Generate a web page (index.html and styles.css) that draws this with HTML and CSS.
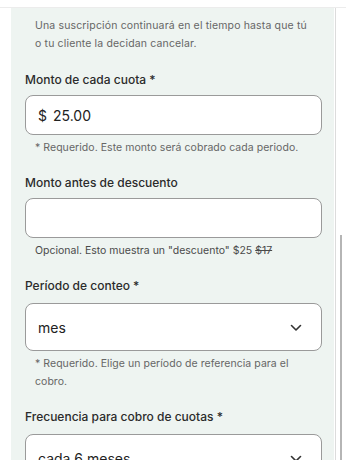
FILE: index.html
```html
<!DOCTYPE html>
<html lang="es">
<head>
    <meta charset="UTF-8">
    <meta name="viewport" content="width=device-width, initial-scale=1.0">
    <title>Suscripción</title>
    <link rel="stylesheet" href="styles.css">
</head>
<body>

<div class="top-bar"></div>

<div class="page">
    <div class="panel">
        <p class="intro">Una suscripción continuará en el tiempo hasta que tú o tu cliente la decidan cancelar.</p>

        <div class="field">
            <label class="label">Monto de cada cuota *</label>
            <div class="input"><span class="currency">$</span> 25.00</div>
            <div class="hint">* Requerido. Este monto será cobrado cada periodo.</div>
        </div>

        <div class="field">
            <label class="label">Monto antes de descuento</label>
            <div class="input"></div>
            <div class="hint dark">Opcional. Esto muestra un "descuento" $25 <s>$17</s></div>
        </div>

        <div class="field">
            <label class="label wide-gap">Período de conteo *</label>
            <div class="input select">
                <span>mes</span>
                <svg class="chevron" width="12" height="8" viewBox="0 0 12 8"><path d="M1.5 1.5 L6 6 L10.5 1.5" fill="none" stroke="#333" stroke-width="1.6" stroke-linecap="round" stroke-linejoin="round"/></svg>
            </div>
            <div class="hint narrow">* Requerido. Elige un período de referencia para el cobro.</div>
        </div>

        <div class="field">
            <label class="label wide-gap">Frecuencia para cobro de cuotas *</label>
            <div class="input select">
                <span>cada 6 meses</span>
                <svg class="chevron" width="12" height="8" viewBox="0 0 12 8"><path d="M1.5 1.5 L6 6 L10.5 1.5" fill="none" stroke="#333" stroke-width="1.6" stroke-linecap="round" stroke-linejoin="round"/></svg>
            </div>
        </div>
    </div>
    <div class="side"></div>
</div>

<div class="scroll-thumb"></div>

</body>
</html>
```

FILE: styles.css
```css
body {
    font-family: Inter, 'Noto Sans', sans-serif;
    background-color: white;
    margin: 0;
    padding: 0;
    height: 460px;
    overflow: hidden;
    color: #2b2b2b;
}

.top-bar {
    height: 7px;
    border-bottom: 1px solid #ececec;
    background-color: white;
}

.page {
    display: flex;
    padding-left: 11px;
}

.panel {
    width: 323px;
    background-color: #eef4f1;
    padding: 9px 12px 0 14px;
    box-sizing: border-box;
    min-height: 460px;
}

.side {
    width: 1px;
    margin-left: 1px;
    background-color: #dcdcdc;
}

.intro {
    margin: 0 0 19px 10px;
    font-size: 10.5px;
    letter-spacing: 0.15px;
    line-height: 18px;
    color: #666;
    width: 272px;
}

.field {
    margin-bottom: 18px;
}

.label {
    display: block;
    font-size: 12px;
    font-weight: 500;
    color: #2b2b2b;
    margin-bottom: 8px;
}

.label.wide-gap {
    margin-bottom: 10px;
}

.input {
    height: 40px;
    box-sizing: border-box;
    background-color: white;
    border: 1px solid #9a9a9a;
    border-radius: 8px;
    padding: 0 12px;
    display: flex;
    align-items: center;
    font-size: 14px;
    color: #222;
}

.currency {
    margin-right: 6px;
}

.select {
    height: 48px;
    justify-content: space-between;
    padding: 0 19px 0 12px;
}

.chevron {
    margin-top: 1px;
}

.hint {
    margin: 4px 0 0 10px;
    font-size: 10.5px;
    letter-spacing: 0.05px;
    line-height: 18px;
    color: #666;
}

.hint.dark {
    color: #4a4a4a;
    letter-spacing: 0;
}

.hint.narrow {
    width: 262px;
}

.scroll-thumb {
    position: absolute;
    left: 340px;
    top: 235px;
    width: 2px;
    height: 225px;
    background-color: #b5b5b5;
}
```
